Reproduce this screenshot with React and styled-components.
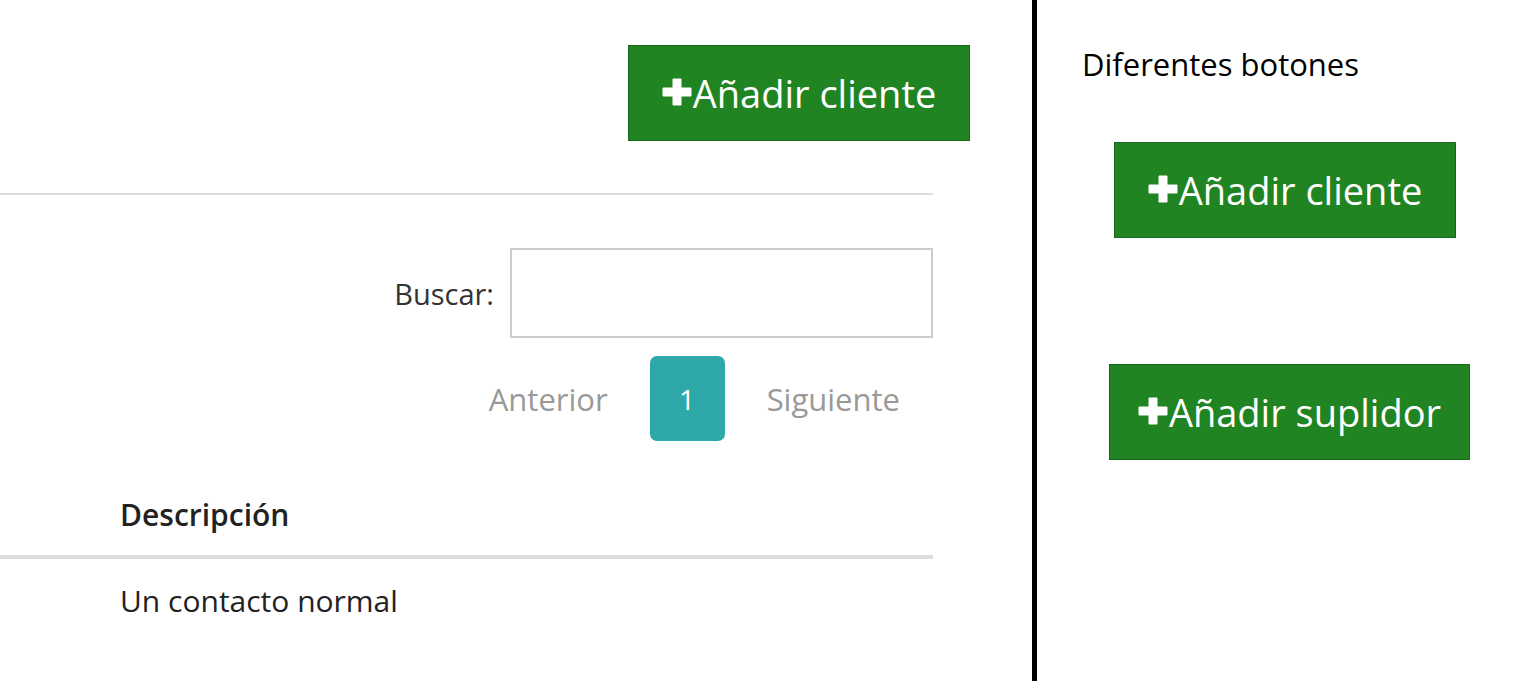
import styled, { createGlobalStyle } from 'styled-components';

const GlobalStyle = createGlobalStyle`
  html, body {
    margin: 0;
    padding: 0;
    background: #ffffff;
  }

  body {
    font-family: "Open Sans", "Noto Sans", sans-serif;
    color: #333333;
  }
`;

const Page = styled.div`
  display: flex;
  height: 681px;
  overflow: hidden;
`;

const LeftPanel = styled.div`
  width: 970px;
  flex-shrink: 0;
`;

const Header = styled.div`
  display: flex;
  justify-content: flex-end;
  padding-top: 45px;
  height: 148px;
  width: 970px;
`;

const Content = styled.div`
  width: 933px;
  border-top: 2px solid #dddddd;
`;

const AddButton = styled.button`
  display: flex;
  align-items: center;
  justify-content: center;
  gap: 1px;
  width: ${props => props.$width}px;
  height: 96px;
  padding: 0;
  background: #218423;
  border: 1px solid #17661a;
  color: #ffffff;
  font-family: "Open Sans", "Noto Sans", sans-serif;
  font-size: 38px;
  line-height: 1;
  cursor: pointer;

  svg {
    flex-shrink: 0;
    margin-top: -2px;
  }
`;

const SearchRow = styled.div`
  display: flex;
  justify-content: flex-end;
  align-items: center;
  gap: 16px;
  margin-top: 53px;
`;

const SearchLabel = styled.label`
  font-size: 29px;
  color: #333333;
`;

const SearchInput = styled.input`
  width: 423px;
  height: 90px;
  box-sizing: border-box;
  border: 2px solid #cccccc;
  outline: none;
  font-size: 26px;
  padding: 0 12px;
`;

const Pager = styled.div`
  display: flex;
  justify-content: flex-end;
  align-items: center;
  gap: 42px;
  margin-top: 18px;
  padding-right: 33px;
`;

const PageLink = styled.span`
  font-size: 31px;
  color: #999999;
`;

const PageCurrent = styled.span`
  display: flex;
  align-items: center;
  justify-content: center;
  width: 75px;
  height: 85px;
  border-radius: 7px;
  background: #2fa8aa;
  color: #ffffff;
  font-size: 28px;
`;

const Table = styled.div`
  margin-top: 54px;
`;

const HeadCell = styled.div`
  padding: 0 0 20px 120px;
  font-size: 30px;
  line-height: 40px;
  font-weight: 600;
  color: #222222;
  border-bottom: 4px solid #dddddd;
`;

const BodyCell = styled.div`
  padding: 22px 0 0 120px;
  font-size: 30px;
  line-height: 40px;
  color: #222222;
`;

const Divider = styled.div`
  width: 5px;
  margin-left: 62px;
  flex-shrink: 0;
  background: #000000;
`;

const RightPanel = styled.div`
  display: flex;
  flex-direction: column;
  padding-top: 42px;
`;

const Title = styled.h2`
  margin: 0 0 0 45px;
  font-size: 31px;
  line-height: 44px;
  font-weight: 400;
  color: #000000;
`;

const ButtonSlot = styled.div`
  margin-left: ${props => props.$left}px;
  margin-top: ${props => props.$top}px;
`;

function PlusIcon() {
  return (
    <svg width="30" height="28" viewBox="0 0 30 28">
      <path
        d="M11 1h8v9h10v8H19v9h-8v-9H1v-8h10z"
        fill="#ffffff"
        stroke="#ffffff"
        strokeWidth="1"
        strokeLinejoin="round"
      />
    </svg>
  );
}

function AddCustomerButton({ label, width }) {
  return (
    <AddButton $width={width}>
      <PlusIcon />
      <span>{label}</span>
    </AddButton>
  );
}

export default function App() {
  return (
    <>
      <GlobalStyle />
      <Page>
        <LeftPanel>
          <Header>
            <AddCustomerButton label="Añadir cliente" width={342} />
          </Header>
          <Content>
            <SearchRow>
              <SearchLabel htmlFor="buscar">Buscar:</SearchLabel>
              <SearchInput id="buscar" type="search" />
            </SearchRow>
            <Pager>
              <PageLink>Anterior</PageLink>
              <PageCurrent>1</PageCurrent>
              <PageLink>Siguiente</PageLink>
            </Pager>
            <Table>
              <HeadCell>Descripción</HeadCell>
              <BodyCell>Un contacto normal</BodyCell>
            </Table>
          </Content>
        </LeftPanel>
        <Divider />
        <RightPanel>
          <Title>Diferentes botones</Title>
          <ButtonSlot $left={77} $top={56}>
            <AddCustomerButton label="Añadir cliente" width={342} />
          </ButtonSlot>
          <ButtonSlot $left={72} $top={126}>
            <AddCustomerButton label="Añadir suplidor" width={361} />
          </ButtonSlot>
        </RightPanel>
      </Page>
    </>
  );
}
